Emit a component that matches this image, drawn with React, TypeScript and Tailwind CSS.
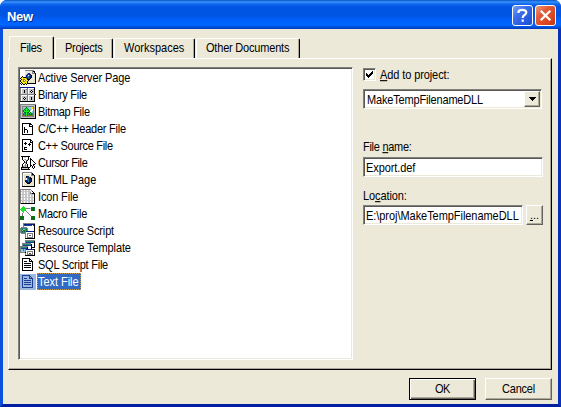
import React from "react";

const palette: Record<string, string> = {
  k: "#000000",
  w: "#ffffff",
  g: "#808080",
  s: "#c6c6c6",
  d: "#505058",
  y: "#ffe800",
  o: "#8c7a00",
  b: "#1c3f94",
  n: "#0c1c84",
  c: "#8ccbe0",
  t: "#1c8c84",
  G: "#0a7018",
  L: "#18e828",
  i: "#e8ebdc",
  p: "#9cb8de",
  e: "#e6e6c8",
  r: "#98a098",
};

const asp = [
  "....wggggggggg..",
  "....wiiiiiiigkk.",
  "....wiiiiiiigek.",
  "....wiisnniigggk",
  "....wisnbbkiiiek",
  "....wsnbwtbkiiek",
  "..k.wsnttnnkiiek",
  ".kykkknbtbnkiiek",
  "kyyyyyokbbkiiiek",
  ".kyooyykkkiiieek",
  "kyyowoyykiiiieek",
  "kyyooyykeeeeeeek",
  ".kyyyyykeeeeeeek",
  "kykyykykkkkkkkkk",
  ".k.kk.k.........",
  "................",
];
const binary = [
  "nnnnnnnnnnnnnnn.",
  "gwwwwwwgwwwwwwk.",
  "gwssssggwssssgk.",
  "gwsskssgwsskssk.",
  "gwsskssgwskwksk.",
  "gwsskssgwsskssk.",
  "gwsssssgwsssssk.",
  "gggggggggggggggk",
  "gwwwwwwgwwwwwwk.",
  "gwsssssgwsssssk.",
  "gwsskssgwsskssk.",
  "gwskwksgwsskssk.",
  "gwsskssgwsskssk.",
  "gwsssssgwsssssk.",
  "kkkkkkkkkkkkkkk.",
  "................",
];
const bitmap = [
  "gggggggggggggggg",
  "gssssssssssssssk",
  "gsggggggggggggsk",
  "gsgcccGccccyygsk",
  "gsgccGLGcccyygsk",
  "gsgcGLLLGcccwgsk",
  "gsgGLGLGLGcwwgsk",
  "gsgGLLLLLGwwcgsk",
  "gsgcGGLGGcGccgsk",
  "gsgttGLGtGLGtgsk",
  "gsgGttLttGGGtgsk",
  "gsgooGLGooooogsk",
  "gsggggggggggggsk",
  "gssssssssssssssk",
  "gkkkkkkkkkkkkkkk",
  "................",
];
const header = [
  "................",
  "................",
  "..kkkkkkkkk.....",
  "..kwwwwwwkkk....",
  "..kwwwwwwkwwk...",
  "..kwwwwwwkkkk...",
  "..kwkwwwwwwwk...",
  "..kwkwwwwwwwk...",
  "..kwkkkwwwwwk...",
  "..kwkwwkwwwwk...",
  "..kwkwwkwwwwk...",
  "..kwkwwkwwwwk...",
  "..kwwwwwwwwwk...",
  "..kkkkkkkkkkk...",
  "................",
  "................",
];
const source = [
  "................",
  "..kkkkkkkkk.....",
  "..kwwwwwwwkk....",
  "..kwwwwwwwkwk...",
  "..kwwkwwwwkkk...",
  "..kwkkkwwkwwk...",
  "..kwwkwwkkkwk...",
  "..kwwwwwwkwwk...",
  "..kwwwwwwwwwk...",
  "..kwkkkwwwwwk...",
  "..kwkwwwwwwwk...",
  "..kwkkkwwwwwk...",
  "..kwwwwwwwwwk...",
  "..kkkkkkkkkkk...",
  "................",
  "................",
];
const cursor = [
  "................",
  ".kkkkkkkkk......",
  "..kwsswwk.......",
  "..kwwwwwk.k.....",
  "..kwsgwsk.kk....",
  "...kwsgk..kwk...",
  "....kwk...kwwk..",
  "....kgk...kwwwk.",
  "...kwsk...kwwwwk",
  "..kwwgwk..kwwkk.",
  "..kwsgsk..kkwk..",
  "..kgsgsk..k.kwk.",
  ".kkkkkkkkk..kwk.",
  ".kssssssk....k..",
  ".kkkkkkkkk......",
  "................",
];
const html = [
  "..gggggggggg....",
  "..gwwwwwwwwgk...",
  "..gweeeeeewgkk..",
  "..gweeeeeewgggk.",
  "..gweeknneeeeek.",
  "..gwesnbbbkeeek.",
  "..gweswtbnkkeek.",
  "..gweswttnnkeek.",
  "..gwennbtnnkeek.",
  "..gweknntnnkeek.",
  "..gweeknnkkeeek.",
  "..gweeekkkeeeek.",
  "..gweeeeeeeeeek.",
  "..gweeeeeeeeeek.",
  "..kkkkkkkkkkkkk.",
  "................",
];
const icon = [
  "ggggggggggg.....",
  "gwsswsswsswg....",
  "gsssssssssswk...",
  "gwsswsswssgwwk..",
  "gwsswsswssggkkk.",
  "gsssssssssssssk.",
  "gwsswsswsswsswk.",
  "gwsswsswsswsswk.",
  "gsssssssssssssk.",
  "gwsswsswsswsswk.",
  "gwsswsswsswsswk.",
  "gsssssssssssssk.",
  "gwsswsswsswsswk.",
  "gwsswsswsswsswk.",
  "gkkkkkkkkkkkkkk.",
  "................",
];
const macro = [
  "...L............",
  "..LLL......GGGG.",
  ".LLLLLggggsGGGG.",
  "LLLLLL.....GGGG.",
  ".LLLLg.....GGGG.",
  "..LL..g.........",
  "...L...g........",
  "..g.....g.......",
  "..g......g......",
  "..g.......g.....",
  "GGGG.......GGGG.",
  "GGGG.......GGGG.",
  "GGGG.......GGGG.",
  "GGGG.......GGGG.",
  "................",
  "................",
];
const script = [
  "...gggggggggggg.",
  "...gnnnnnnnnnnk.",
  "...gbbbbbbbbwbk.",
  "...gwwwwwwwwwwk.",
  ".ggggggwwwwwwwk.",
  "gttttttgwwwwwwk.",
  "gtGcctGgwwwwwwk.",
  "gtcGGttgwwwwwwk.",
  "gtGtGgnnnnnnnnk.",
  "gttttgwwwwwwwwk.",
  ".gggggwggggggwk.",
  ".....gwgwwwwgwk.",
  ".....gwgwddwgwk.",
  ".....gwgwwwwgwk.",
  ".....gwggggggwk.",
  ".....kkkkkkkkkk.",
];
const template = [
  ".....gggggggggg.",
  ".....gttttttttk.",
  ".....gbbbbbbbbk.",
  "..gggggggggwwwk.",
  "..gttttttttkwwk.",
  "..gbbbbbbbbkwwk.",
  "ggggggggwwwkwwk.",
  "gttttttkwwwkkkk.",
  "gbbbbbbkwwwk....",
  "gcctcgnnnnnnnnk.",
  "gcctcgwwwwwwwwk.",
  "gccccgwggggggwk.",
  "gggggkwgwwwwgwk.",
  ".....gwgwddwgwk.",
  ".....gwggggggwk.",
  ".....kkkkkkkkkk.",
];
const doc = [
  "................",
  "..kkkkkkkk......",
  "..kwwwwwwkk.....",
  "..kwwwwwwkwk....",
  "..kwkkkwwkkkk...",
  "..kwwwwwwwwwk...",
  "..kwkkkkkkkwk...",
  "..kwwwwwwwwwk...",
  "..kwkkkkkkkwk...",
  "..kwwwwwwwwwk...",
  "..kwkkkkkkkwk...",
  "..kwwwwwwwwwk...",
  "..kwwwwwwwwwk...",
  "..kkkkkkkkkkk...",
  "................",
  "................",
];
const docSelected = doc.map((row) =>
  row.replace(/k/g, "b").replace(/w/g, "p").replace(/\./g, "p"),
);

function PixelIcon({ rows }: { rows: string[] }) {
  return (
    <svg width="16" height="16" viewBox="0 0 16 16" shapeRendering="crispEdges" className="shrink-0">
      {rows.flatMap((row, y) =>
        row.split("").map((ch, x) =>
          ch === "." ? null : (
            <rect key={`${x}-${y}`} x={x} y={y} width="1" height="1" fill={palette[ch]} />
          ),
        ),
      )}
    </svg>
  );
}

function Caption({ children, className = "" }: { children: React.ReactNode; className?: string }) {
  return (
    <span className={`inline-block origin-[0_78%] translate-y-px scale-y-[1.12] ${className}`}>
      {children}
    </span>
  );
}

const files: { name: string; rows: string[]; track: string }[] = [
  { name: "Active Server Page", rows: asp, track: "tracking-[-0.11px]" },
  { name: "Binary File", rows: binary, track: "tracking-[-0.28px]" },
  { name: "Bitmap File", rows: bitmap, track: "tracking-[-0.3px]" },
  { name: "C/C++ Header File", rows: header, track: "tracking-[-0.22px]" },
  { name: "C++ Source File", rows: source, track: "tracking-[-0.32px]" },
  { name: "Cursor File", rows: cursor, track: "tracking-[-0.4px]" },
  { name: "HTML Page", rows: html, track: "tracking-[0px]" },
  { name: "Icon File", rows: icon, track: "tracking-[-0.15px]" },
  { name: "Macro File", rows: macro, track: "tracking-[-0.22px]" },
  { name: "Resource Script", rows: script, track: "tracking-[-0.15px]" },
  { name: "Resource Template", rows: template, track: "tracking-[-0.1px]" },
  { name: "SQL Script File", rows: doc, track: "tracking-[-0.24px]" },
  { name: "Text File", rows: docSelected, track: "tracking-[-0.05px]" },
];

const sunken =
  "border border-t-[#808080] border-l-[#808080] border-r-white border-b-white bg-white shadow-[inset_1px_1px_0_#5a5850,inset_-1px_-1px_0_#ece9d8]";
const raised =
  "border border-t-white border-l-white border-r-[#64625a] border-b-[#64625a] bg-[#ece9d8] shadow-[inset_-1px_-1px_0_#aca899]";

function Tab({ label, className }: { label: string; className: string }) {
  return (
    <div
      className={`flex h-[20px] items-center rounded-t-[2px] border-t border-l border-r border-t-white border-l-white border-r-black pb-[2px] shadow-[inset_-1px_0_0_#aca899] ${className}`}
    >
      <Caption>{label}</Caption>
    </div>
  );
}

export default function App() {
  return (
    <div className="flex h-[407px] w-[561px] flex-col overflow-hidden bg-white font-['Liberation_Sans',Arial,sans-serif] text-[11px] leading-[13px] whitespace-nowrap text-black">
      <div className="flex h-full flex-col rounded-t-[7px] border-r-[3px] border-b-[3px] border-l-[3px] border-l-[#0a50dc] border-r-[#0831b8] border-b-[#001ea0] bg-[#0054e3]">
        <header className="-mx-[3px] flex h-[29px] shrink-0 items-start rounded-t-[7px] bg-[linear-gradient(180deg,#0753c8_0px,#3a91fb_2px,#1168ef_4px,#0055e4_7px,#0054e2_15px,#0060fb_20px,#0066ff_25px,#0050e0_27px,#003bb8_29px)] pt-[5px] pr-[5px] pl-[7px]">
          <h1 className="mt-[4px] text-[13px] leading-[15px] font-bold tracking-[-0.3px] text-white [text-shadow:1px_1px_0_#0a2a80]">
            New
          </h1>
          <div className="ml-auto flex gap-[2px]">
            <button className="flex size-[21px] items-center justify-center rounded-[3px] border border-white bg-[linear-gradient(135deg,#7ba4f4_0%,#3c70e8_35%,#2458e0_75%,#2050c8_100%)]">
              <svg width="19" height="19" viewBox="0 0 19 19" fill="none" stroke="white" strokeWidth="2.2">
                <path d="M5.5 7V5.5C6 4 7 3.8 9.5 3.8S13.3 5 13.3 6.5C13.3 9 9.7 9 9.7 12" />
                <path d="M9.7 13.5V15.8" />
              </svg>
            </button>
            <button className="flex size-[21px] items-center justify-center rounded-[3px] border border-white bg-[linear-gradient(135deg,#ed9a7e_0%,#e35b37_35%,#db441c_75%,#b83410_100%)]">
              <svg width="19" height="19" viewBox="0 0 19 19" stroke="white" strokeWidth="2.3">
                <path d="M4.7 4.7L14.3 14.3M14.3 4.7L4.7 14.3" />
              </svg>
            </button>
          </div>
        </header>
        <main className="flex grow flex-col bg-[#ece9d8] pt-[7px] pr-[6px] pl-[5px]">
          <nav className="flex h-[22px] items-end pl-px">
            <div className="relative z-10 -mb-px flex h-[23px] w-[45px] items-center rounded-t-[2px] border-t border-r border-l border-t-white border-r-black border-l-white bg-[#ece9d8] pb-[2px] pl-[10px] shadow-[inset_-1px_0_0_#aca899]">
              <Caption className="tracking-[-0.3px]">Files</Caption>
            </div>
            <Tab label="Projects" className="ml-px w-[58px] pl-[9px] tracking-[-0.3px]" />
            <Tab label="Workspaces" className="ml-px w-[81px] pl-[9px] tracking-[0px]" />
            <Tab label="Other Documents" className="ml-px w-[104px] pl-[9px] tracking-[-0.2px]" />
          </nav>
          <section className="flex h-[312px] w-[544px] shrink-0 border border-t-white border-r-black border-b-black border-l-white pt-[8px] pl-[9px] shadow-[inset_-1px_-1px_0_#aca899]">
            <ul className={`h-[293px] w-[335px] px-px pt-px ${sunken}`}>
              {files.map((file, index) => {
                const selected = index === files.length - 1;
                return (
                  <li key={file.name} className="flex h-[17px] items-center">
                    <PixelIcon rows={file.rows} />
                    <span
                      className={`${file.track} ml-px flex h-[17px] items-center px-px ${
                        selected ? "bg-[#316ac5] pr-[2px] text-white outline outline-1 -outline-offset-1 outline-dotted outline-[#c89b48]" : ""
                      }`}
                    >
                      <Caption>{file.name}</Caption>
                    </span>
                  </li>
                );
              })}
            </ul>
            <div className="ml-[10px] flex w-[180px] flex-col pt-px">
              <label className="flex h-[13px] items-center">
                <span className={`flex size-[13px] items-center justify-center ${sunken}`}>
                  <svg width="7" height="7" viewBox="0 0 7 7" shapeRendering="crispEdges">
                    <path d="M0 2h1v1h1v1h1v-1h1v-1h1v-1h1v-1h1v3h-1v1h-1v1h-1v1h-1v1h-1v-1h-1v-1h-1z" />
                  </svg>
                </span>
                <Caption className="ml-[4px] tracking-[-0.1px]">
                  <u>A</u>dd to project:
                </Caption>
              </label>
              <div className={`mt-[8px] flex h-[20px] w-[179px] items-center justify-between py-px pr-px pl-[3px] ${sunken}`}>
                <Caption className="tracking-[-0.17px]">MakeTempFilenameDLL</Caption>
                <button className={`flex h-[16px] w-[16px] items-center justify-center ${raised}`}>
                  <svg width="7" height="4" viewBox="0 0 7 4" shapeRendering="crispEdges">
                    <path d="M0 0h7v1h-1v1h-1v1h-1v1h-1v-1h-1v-1h-1v-1h-1z" />
                  </svg>
                </button>
              </div>
              <label className="mt-[31px] tracking-[-0.28px]">
                <Caption>
                  File <u>n</u>ame:
                </Caption>
              </label>
              <div className={`mt-[4px] flex h-[20px] w-[180px] items-center pl-[2px] ${sunken}`}>
                <Caption className="tracking-[-0.1px]">Export.def</Caption>
              </div>
              <label className="mt-[12px] tracking-[-0.1px]">
                <Caption>
                  Lo<u>c</u>ation:
                </Caption>
              </label>
              <div className="mt-[3px] flex gap-[3px]">
                <div className={`flex h-[20px] w-[160px] items-center pl-[2px] tracking-[-0.05px] ${sunken}`}>
                  <Caption>E:\proj\MakeTempFilenameDLL</Caption>
                </div>
                <button className={`flex h-[20px] w-[17px] items-center justify-center ${raised}`}>
                  <u>.</u>..
                </button>
              </div>
            </div>
          </section>
          <footer className="mt-[8px] flex justify-end gap-[9px]">
            <button className="h-[22px] w-[67px] border border-black bg-[#ece9d8] pb-px shadow-[inset_1px_1px_0_white,inset_-1px_-1px_0_#64625a,inset_-2px_-2px_0_#aca899]">
              <Caption className="tracking-[-0.4px]">OK</Caption>
            </button>
            <button className={`h-[22px] w-[67px] pb-px tracking-[-0.2px] ${raised}`}>
              <Caption>Cancel</Caption>
            </button>
          </footer>
        </main>
      </div>
    </div>
  );
}
